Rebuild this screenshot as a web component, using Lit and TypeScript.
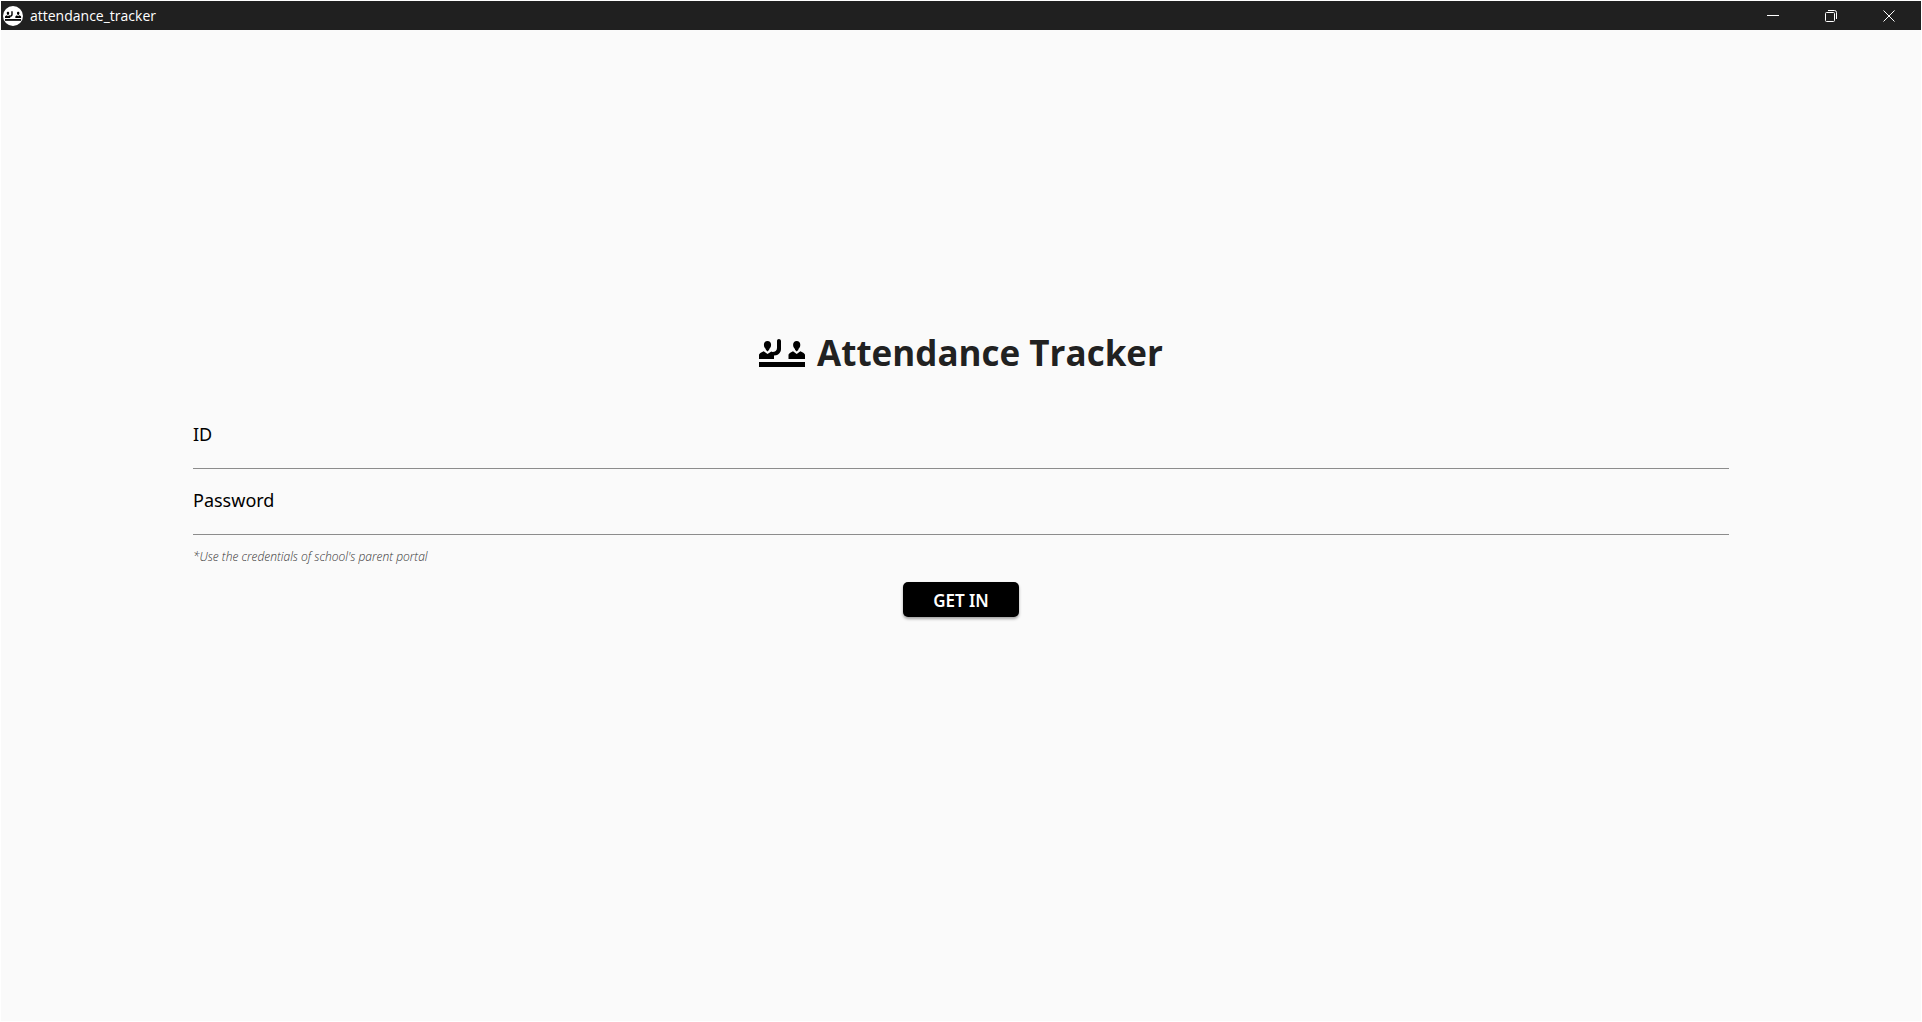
import { LitElement, html, css, svg } from "lit";
import { customElement } from "lit/decorators.js";

// Two people behind a desk, the left one with a raised hand (46 x 28 grid).
const classGlyph = svg`
  <path d="M0 23h46v5H0z"/>
  <path d="M8.500 2c2.200 0 3.600 1.600 3.600 3.800 0 2-.900 3.400-1.900 4.200v.800L8.500 12.500 6.800 10.800V10C5.800 9.200 4.900 7.800 4.900 5.800 4.900 3.600 6.300 2 8.500 2z"/>
  <path d="M0 20v-4c0-1 1-2 2.200-2.600l2.500-1.200L8.500 15l3.800-2.600 1.200.600c2.500-.200 4.500-1.400 4.500-4V2c0-1.100.800-2 1.900-2s2.100.900 2.100 2v8c0 3-2 5.600-5 6.200l-2 .300V20z"/>
  <path d="M37.700 2c2.200 0 3.600 1.600 3.600 3.800 0 2-.900 3.400-1.900 4.200v.800l-1.700 1.700-1.700-1.700V10c-1-.8-1.900-2.200-1.900-4.200 0-2.200 1.400-3.800 3.600-3.800z"/>
  <path d="M29.500 20v-4c0-1 1-2 2.200-2.600l2.300-1.200 3.700 2.800 3.700-2.800 2.400 1.200C45 14 46 15 46 16v4z"/>
`;

@customElement("app-root")
export class AppRoot extends LitElement {
  static styles = css`
    :host {
      display: flex;
      flex-direction: column;
      box-sizing: border-box;
      min-height: 100vh;
      border: 1px solid #ffffff;
      background: #fafafa;
      color: #212121;
      font-family: "Open Sans", "Noto Sans", sans-serif;
    }
    .titlebar {
      display: flex;
      align-items: center;
      height: 29px;
      padding-right: 3px;
      background: #202020;
      color: #ffffff;
    }
    .app-icon {
      width: 20px;
      height: 20px;
      margin: 0 7px 0 2px;
    }
    .app-name {
      flex: 1;
      font-size: 14px;
      line-height: 20px;
    }
    .caption {
      display: flex;
      align-items: center;
      justify-content: center;
      width: 58px;
      height: 28px;
      padding: 0;
      border: 0;
      background: none;
      color: inherit;
    }
    .caption svg {
      width: 12px;
      height: 12px;
      fill: none;
      stroke: currentColor;
    }
    .caption:hover {
      background: #3a3a3a;
    }
    .page {
      flex: 1;
      display: flex;
      flex-direction: column;
      justify-content: center;
      padding: 0 10% 108px;
    }
    .heading {
      display: flex;
      align-items: center;
      justify-content: center;
      gap: 12px;
      margin: 0 0 23px;
      font-size: 35px;
      font-weight: 700;
      line-height: 54px;
    }
    .heading svg {
      width: 46px;
      height: 28px;
      fill: #000000;
    }
    .login {
      display: flex;
      flex-direction: column;
    }
    .field {
      display: flex;
      flex-direction: column;
      padding-top: 17px;
      color: #000000;
      font-family: "Noto Sans", sans-serif;
      font-size: 18px;
      line-height: 28px;
    }
    .field input {
      box-sizing: border-box;
      height: 21px;
      padding: 0;
      border: 0;
      border-bottom: 1px solid #8c8c8c;
      outline: none;
      background: none;
      font: inherit;
      line-height: 20px;
    }
    .hint {
      margin: 10px 0 13px;
      color: #333333;
      font-size: 12px;
      font-style: italic;
      font-weight: 300;
      line-height: 24px;
    }
    .submit {
      align-self: center;
      height: 35px;
      padding: 2px 30px 0;
      border: 0;
      border-radius: 5px;
      background: #000000;
      box-shadow: 0 2px 3px rgba(0, 0, 0, 0.35);
      color: #ffffff;
      font: 600 17px/24px "Noto Sans", sans-serif;
    }
  `;

  render() {
    return html`
      <header class="titlebar">
        <svg class="app-icon" viewBox="0 0 20 20" aria-hidden="true">
          <circle cx="10" cy="10" r="10" fill="#fff" />
          <g transform="translate(2 5) scale(.35)">${classGlyph}</g>
        </svg>
        <span class="app-name">attendance_tracker</span>
        <button class="caption" aria-label="Minimize">
          <svg viewBox="0 0 12 12"><path d="M0 5.500h12" /></svg>
        </button>
        <button class="caption" aria-label="Restore">
          <svg viewBox="0 0 12 12">
            <rect x=".5" y="2.500" width="9" height="9" rx="1" />
            <path d="M3 .500h6.500a2 2 0 0 1 2 2V9" />
          </svg>
        </button>
        <button class="caption" aria-label="Close">
          <svg viewBox="0 0 12 12"><path d="M.5.500l11 11M11.500.500l-11 11" /></svg>
        </button>
      </header>
      <main class="page">
        <h1 class="heading">
          <svg viewBox="0 0 46 28" aria-hidden="true">${classGlyph}</svg>
          <span>Attendance Tracker</span>
        </h1>
        <form class="login" @submit=${(e: Event) => e.preventDefault()}>
          <div class="field">
            <label for="user-id">ID</label>
            <input id="user-id" type="text" autocomplete="username" />
          </div>
          <div class="field">
            <label for="password">Password</label>
            <input id="password" type="password" autocomplete="current-password" />
          </div>
          <p class="hint">*Use the credentials of school's parent portal</p>
          <button class="submit" type="submit">GET IN</button>
        </form>
      </main>
    `;
  }
}
